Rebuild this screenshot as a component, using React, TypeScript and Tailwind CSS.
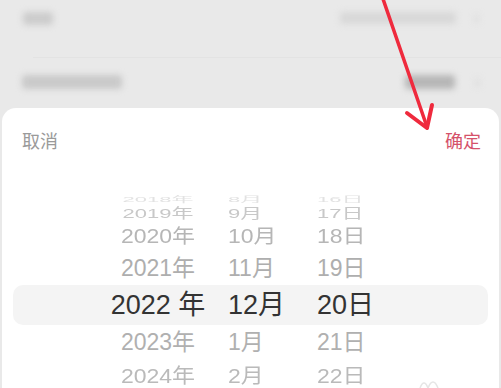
import React from 'react'

// wheel rows: outer ones are squashed like a 3D picker drum
const rows = [
  { y: '2018', m: '8', d: '16', h: 'h-[14px]', cls: 'text-[22px] scale-y-[0.35] text-[#e2e2e2]' },
  { y: '2019', m: '9', d: '17', h: 'h-[19px]', cls: 'text-[22px] scale-y-[0.6] text-[#c8c8c8]' },
  { y: '2020', m: '10', d: '18', h: 'h-[29px]', cls: 'text-[23px] scale-y-[0.85] text-[#b6b6b6]' },
  { y: '2021', m: '11', d: '19', h: 'h-[34px]', cls: 'text-[23px] text-[#aeaeae]' },
  { y: '2022', m: '12', d: '20', h: 'h-[40px]', cls: 'text-[27px] text-[#333333]', active: true },
  { y: '2023', m: '1', d: '21', h: 'h-[35px]', cls: 'text-[23px] text-[#b0b0b0]' },
  { y: '2024', m: '2', d: '22', h: 'h-[32px]', cls: 'text-[23px] scale-y-[0.9] text-[#bababa]' },
]

function Blob({ className }: { className: string }) {
  return <div className={`rounded-[3px] blur-[3px] ${className}`} />
}

export default function App() {
  return (
    <div
      className="relative w-[501px] h-[388px] overflow-hidden bg-[#e9e9e9] flex flex-col"
      style={{ fontFamily: '"Liberation Sans", "Noto Sans CJK SC", sans-serif' }}
    >
      {/* blurred settings list behind the sheet */}
      <div className="h-[36px] shrink-0 flex items-center pl-[23px] pr-[22px]">
        <Blob className="w-[30px] h-[13px] bg-[#cccccc]" />
        <div className="flex-1" />
        <Blob className="w-[116px] h-[12px] bg-[#d8d8d8]" />
        <Blob className="ml-[18px] w-[5px] h-[9px] bg-[#dedede]" />
      </div>
      <div className="mt-[21px] ml-[33px] h-px shrink-0 bg-[#e3e3e3]" />
      <div className="mt-[6px] h-[36px] shrink-0 flex items-center pl-[22px] pr-[21px]">
        <Blob className="w-[100px] h-[14px] bg-[#c9c9c9]" />
        <div className="flex-1" />
        <Blob className="w-[50px] h-[14px] bg-[#b6b6b6]" />
        <Blob className="ml-[20px] w-[5px] h-[9px] bg-[#dedede]" />
      </div>
      <div className="h-[8px] shrink-0" />

      {/* bottom sheet */}
      <div className="mx-[2px] flex-1 shrink-0 rounded-t-[14px] bg-white flex flex-col">
        <div className="h-[68px] shrink-0 flex items-center justify-between pl-[20px] pr-[18px] text-[18px]">
          <span className="text-[#9a9a9a]">取消</span>
          <span className="text-[#d5526a]">确定</span>
        </div>
        <div className="h-[13px] shrink-0" />
        <div className="flex flex-col">
          {rows.map((r) => (
            <div
              key={r.y}
              className={`${r.h} mx-[11px] grid grid-cols-[120px_79px_1fr] gap-x-[10px] items-center pl-[85px] shrink-0 ${
                r.active ? 'bg-[#f4f4f4] rounded-[10px]' : ''
              }`}
            >
              <div className={`text-center leading-none whitespace-nowrap ${r.cls}`}>
                {r.y}
                {r.active ? ' ' : ''}年
              </div>
              <div className={`leading-none whitespace-nowrap ${r.cls}`}>{r.m}月</div>
              <div className={`leading-none whitespace-nowrap ${r.cls}`}>{r.d}日</div>
            </div>
          ))}
        </div>
      </div>

      {/* faint watermark mark */}
      <svg className="absolute left-[418px] top-[374px]" width="30" height="14" viewBox="0 0 30 14">
        <path d="M2 14 Q6 4 10 14 M10 14 Q15 2 20 14" fill="none" stroke="#e6e6e6" strokeWidth="1.5" />
      </svg>

      {/* red annotation arrow */}
      <svg className="absolute left-0 top-0 pointer-events-none" width="501" height="388" viewBox="0 0 501 388">
        <line x1="382" y1="-4" x2="426" y2="124" stroke="#ef2a3d" strokeWidth="3.5" strokeLinecap="round" />
        <polyline
          points="407,113 427,128 432,105"
          fill="none"
          stroke="#ef2a3d"
          strokeWidth="4"
          strokeLinecap="round"
          strokeLinejoin="round"
        />
      </svg>
    </div>
  )
}
